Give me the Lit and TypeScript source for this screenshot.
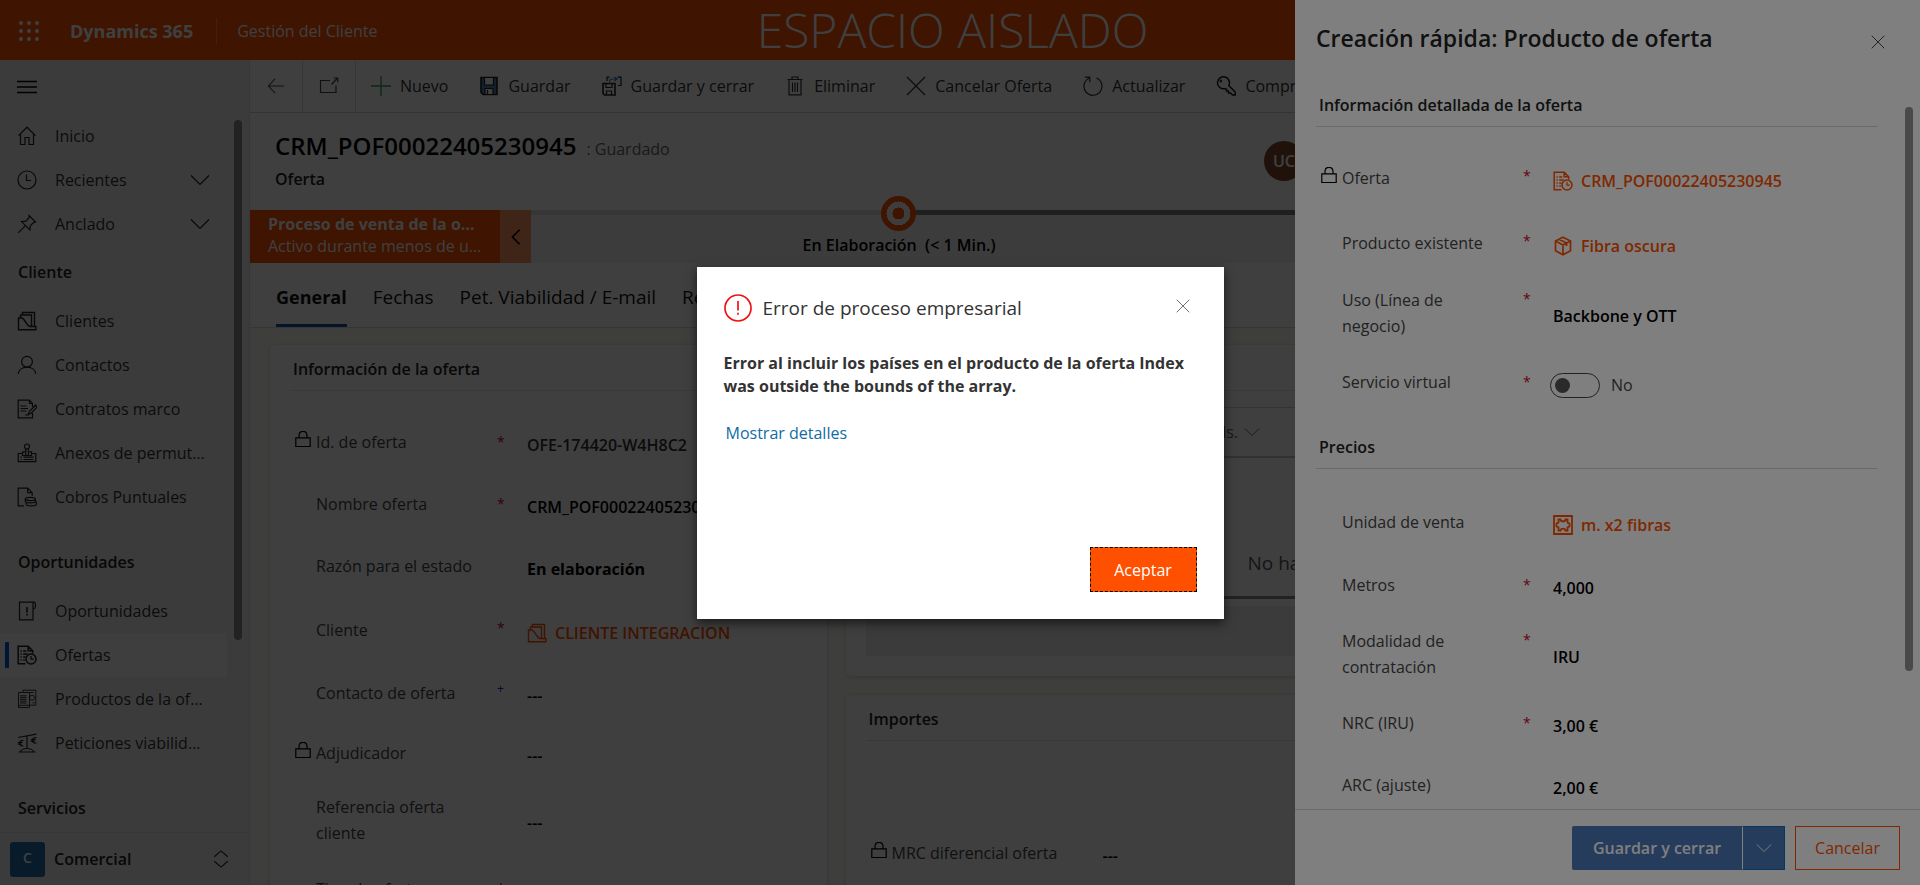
import { LitElement, html, css, svg, nothing, type TemplateResult } from "lit";
import { customElement } from "lit/decorators.js";
import { classMap } from "lit/directives/class-map.js";

type Icon = TemplateResult<2>;

const icon = (body: Icon, size = 20) => html`
  <svg class="icon" width=${size} height=${size} viewBox="0 0 20 20" fill="none" stroke="currentColor"
    stroke-width="1.2" aria-hidden="true">${body}</svg>`;

const ICONS: Record<string, Icon> = {
  menu: svg`<path d="M0 4.500h20M0 10h20M0 15.500h20" stroke-width="1.4"/>`,
  home: svg`<path d="M1.5 9.6 10 1.2l8.500 8.400M3.500 8v10.500h4.500v-7h4v7h4.500V8"/>`,
  clock: svg`<circle cx="10" cy="10" r="9"/><path d="M9.500 4.500v6h4.500"/>`,
  pin: svg`<path d="m12 1.500 6.500 6.500-2 .6-3.200 3.200-.4 4.200-8.400-8.400 4.400-.4 3-3.200zM8.200 11.800 1.200 18.800"/>`,
  chevronDown: svg`<path d="m1 5.500 9 9 9-9"/>`,
  chevronLeft: svg`<path d="m14 2-8 8 8 8" stroke-width="1.8"/>`,
  updown: svg`<path d="m2.500 7.500 7.500-6.500 7.500 6.500M2.500 12.500l7.500 6.500 7.500-6.500"/>`,
  folder: svg`<path d="M1.500 18.800V7H5c2.500.5 4.500 7.800 8 8.500h5.800v3.300z" stroke-width="1.400"/><path d="M3.500 7V4H14.500v11.500M5.500 4V1.500h12v14" stroke-width="1.400"/>`,
  person: svg`<circle cx="10" cy="6.700" r="5.400"/><path d="M1.200 19c.5-4.500 4.300-6.900 8.800-6.900s8.300 2.400 8.800 6.900"/>`,
  contract: svg`<path d="M15.500 8V4.500L12.500 1.200H1.200v17.600h14.300V14M12.500 1.200v3.300h3M3.500 7h6M3.500 9.500h7.500M3.500 12h6M8 16h4M18.800 6l-6.500 6.500-1 2.700 2.700-.8 6-6.200z"/>`,
  stamp: svg`<circle cx="10" cy="3.500" r="2.500"/><path d="M8.700 5.600v3.200H5.500v3.700h9V8.800h-3.200V5.600M5.500 10.500H1.200v8.200h17.600v-8.200h-4.300M3.500 14.200h1.300M6.500 14.200h10M3.500 16.500h1.300M6.500 16.500h10M8.700 8.800v3.700M11.300 8.800v3.700"/>`,
  coins: svg`<path d="M7 18.800H1.200V1.200h9.500l4.500 4.500v3M10.700 1.200v4.500h4.500"/><ellipse cx="13.300" cy="12" rx="5" ry="1.600"/><path d="M8.300 12v2.200c0 2.200 10 2.200 10 0V12M9.300 15.500v1.800c0 2.200 10 2.200 10 0v-2c0-.8-.5-1-1-1.200"/>`,
  opportunity: svg`<path d="M16 7.500v11.300H2.500V1.200h14.800c1.500 0 1.500 6.300 0 6.300H16V1.200"/><path d="M10 6v5.500M10 12.800v1.700" stroke-width="1.600"/>`,
  offer: svg`<path d="M8.500 18.800H1.200V1.200h10l4.500 4.500v2.800M11.200 1.200v4.500h4.500M3.500 6h1.300M6.200 6h3M3.500 9h1.300M6.200 9h4.500M3.500 12h1.300M6.200 12h2.300M3.500 15h1.300M6.200 15h1.600" stroke-width="1.500"/><circle cx="14" cy="14" r="5" stroke-width="1.500"/><path d="M14 11v3.200h2.800"/>`,
  products: svg`<path d="M1.500 3.500h11v15h-11zM6 3.500V1.200h12.800v15h-6.300M1.500 16.300h11M12.500 3.500h4M15.500 13.800h2" stroke-width=".9"/><path d="M3 6.800h6.500M3 8.600h6.500M3 10.400h6.500M3 12.200h6.500M3 14h6.500" stroke-width=".9"/><circle cx="15" cy="8.800" r="2.500" stroke-width=".9"/>`,
  scale: svg`<path d="M1 4.500 19.500 1.200M10 3.500v12M1.500 19h17M3 19c1.500-2.800 4-3.500 7-3.500s5.500.7 7 3.500"/><path d="M6.500 7.800c-4.500-2-6 6-.2 5M.8 9.500h4.700M.8 11.200h4M19.500 5c-4.500-2-6 6-.2 5M13.800 6.700h4.700M13.800 8.400h4"/>`,
  back: svg`<path d="M19 10H1.500M9 2 1.500 10 9 18"/>`,
  popout: svg`<path d="M11 4.500H1.500v12h15.500V9.500M12.500 8.500 18.500 2M14.500 2h4.200v4.200"/>`,
  plus: svg`<path d="M10 0v20M0 10h20" stroke="#2f9e5b" stroke-width="1.300"/>`,
  save: svg`<path d="M2 1.500h16v17H4L2 16.500z" fill="#4d86b8" stroke="#222" stroke-width="1.600"/><path d="M5.500 1.500h9V9h-9z" fill="#fff" stroke="#222"/><path d="M6 18v-5.500h8V18" fill="#fff" stroke="#222"/><path d="M8.500 14v4"/>`,
  saveClose: svg`<path d="M1 7.500h12v11.500H2.500L1 17.500z" stroke="#222" stroke-width="1.600"/><path d="M4 7.500h6v4H4zM4.500 19v-4h5v4" stroke="#222"/><path d="M5 5V1.200h2.500M15.500 1.200H19V9.500h-3" stroke="#222"/><path d="M7.500 6c0-2 1-3 3-3h4M12.500 1l2.500 2-2.500 2" stroke="#2b7cd3"/>`,
  trash: svg`<path d="M2.500 3.500h15M7 3.500V1h6v2.500M4 3.500v15.300h12V3.500M7.500 6.500v9.500M10 6.500v9.500M12.500 6.500v9.500"/>`,
  cross: svg`<path d="m1 1 18 18M19 1 1 19"/>`,
  refresh: svg`<path d="M13.500 2A9 9 0 1 1 6 2.200M1.800 1.200h5v5"/>`,
  key: svg`<path d="M12.800 9.500A6 6 0 1 0 8.300 12.700l2.200.3v2h2v2h2l2 2H19.200v-2.900z" stroke="#111" stroke-width="1.400"/><circle cx="4.800" cy="5" r=".8"/>`,
  lock: svg`<path d="M1 8.500h18v11H1zM5 8.500V6c0-7.300 10-7.300 10 0v2.500" stroke-width="1.500"/>`,
  box: svg`<path d="m10 1.200 7.500 3.800v9.800L10 18.800l-7.500-4V5zM2.500 5 10 9l7.500-4M10 9v9.800M6 3.200l7.500 3.900v3" stroke-width="1.700"/>`,
  unit: svg`<path d="M1 1h18v18H1z" stroke-width="1.800"/><path d="M5.500 4.500h2c.5 2.500 4.500 2.500 5 0h2v3.200l2 .8v3l-2 .8v3.200h-2c-.5-2.500-4.500-2.500-5 0h-2v-3.200l-2-.8v-3l2-.8z" stroke-width="1.800"/>`,
  alert: svg`<circle cx="10" cy="10" r="9.300" stroke-width="1.200"/><path d="M10 5v6.800M10 13.400v1.500" stroke-width="1.200"/>`,
};

interface Field {
  id: string;
  label: string;
  kind: "text" | "choice" | "lookup" | "toggle" | "empty";
  value?: string;
  icon?: string;
  mark?: "required" | "recommended";
  locked?: boolean;
  tone?: "muted" | "strong";
  tall?: boolean;
}

const control = (f: Field) => {
  switch (f.kind) {
    case "lookup":
      return html`<a class="lookup" id=${f.id} href="#">${icon(ICONS[f.icon!])}<span>${f.value}</span></a>`;
    case "choice":
      return html`<select class=${classMap({ control: true, strong: f.tone === "strong" })} id=${f.id}><option>${f.value}</option></select>`;
    case "toggle":
      return html`<span class="toggle"><input type="checkbox" role="switch" id=${f.id}><span>${f.value}</span></span>`;
    default:
      return html`<input type="text" class=${classMap({ control: true, muted: f.tone === "muted" })} id=${f.id}
        .value=${f.value ?? "---"} ?readonly=${!!f.locked}>`;
  }
};

const field = (f: Field) => html`
  <div class=${classMap({ field: true, linked: f.kind === "lookup", double: !!f.tall, compact: !!f.locked && f.kind === "empty" })}>
    <span class="lock">${f.locked ? icon(ICONS.lock, 16) : nothing}</span>
    <label for=${f.id}>${f.label}</label>
    <span class=${classMap({ mark: true, blue: f.mark === "recommended" })}>${f.mark === "required" ? "*" : f.mark ? "+" : ""}</span>
    <div class="value">${control(f)}</div>
  </div>`;

const shared = css`
  :host { display: block; font-family: "Open Sans", "Noto Sans", sans-serif; font-size: 16px; line-height: 26px; color: #222; }
  *, *::before, *::after { box-sizing: border-box; }
  h1, h2, h3, p, ul { margin: 0; padding: 0; font-weight: 400; }
  ul { list-style: none; }
  a { color: inherit; text-decoration: none; }
  button, input, select { font: inherit; color: inherit; margin: 0; padding: 0; border: 0; background: none; border-radius: 0; }
  .icon { display: block; flex: none; }
  .section-title { font-size: 16px; font-weight: 600; line-height: 42px; padding-left: 3px; border-bottom: 1px solid #e6e4e2; }
  .fields { padding-top: 20px; }
  .field { display: grid; grid-template-columns: 26px 175px 36px minmax(0, 1fr); align-items: center; min-height: 62px; }
  .field.linked { min-height: 65px; }
  .field.compact { min-height: 58px; }
  .field.double { min-height: 76px; }
  .lock { padding-left: 5px; padding-bottom: 6px; color: #000; }
  .field label { color: #444; }
  .field.double label { padding-right: 30px; }
  .mark { align-self: start; margin-top: 21px; line-height: 20px; padding-left: 6px; font-size: 14px; color: #d0021b; }
  .double .mark { margin-top: 14px; }
  .mark.blue { color: #2020c0; font-size: 12px; line-height: 12px; }
  .value { padding-top: 6px; min-width: 0; }
  .control { appearance: none; display: block; width: 100%; font-weight: 600; color: #000; line-height: 26px; height: 26px; }
  .control.muted { color: #333; }
  .control.strong { font-weight: 700; }
  .lookup { display: flex; align-items: center; gap: 8px; color: #ff5000; font-weight: 600; }
  .toggle { display: flex; align-items: center; gap: 11px; }
`;

@customElement("app-sidebar")
class AppSidebar extends LitElement {
  static styles = [shared, css`
    :host { display: flex; flex-direction: column; background: #efefef; border-right: 1px solid #dcdcdc; min-height: 0; }
    .toggle-nav { display: flex; align-items: center; height: 54px; padding: 0 17px; flex: none; color: #000; }
    .scroller { flex: 1; min-height: 0; display: flex; overflow: hidden; gap: 7px; padding-right: 7px; }
    nav { flex: 1; min-width: 0; }
    .bar { width: 8px; height: 520px; margin-top: 6px; border-radius: 4px; background: #888; flex: none; }
    .item { display: flex; align-items: center; gap: 18px; height: 44px; padding-left: 17px; padding-right: 17px; }
    .item .name { flex: 1; min-width: 0; max-width: 152px; white-space: nowrap; overflow: hidden; text-overflow: ellipsis; color: #333; }
    .item .name + .icon { margin-left: auto; }
    .item.active { background: #f8f8f8; position: relative; }
    .item.active::before { content: ""; position: absolute; left: 5px; top: 9px; width: 4px; height: 26px; background: #0050d8; border-radius: 1px; }
    h2 { font-size: 16px; font-weight: 600; line-height: 53px; padding-left: 18px; }
    h2.spaced { margin-top: 17px; }
    .area { display: flex; align-items: center; height: 53px; padding: 0 19px 0 10px; gap: 9px; border-top: 1px solid #dcdcdc; font-weight: 600; flex: none; width: 100%; text-align: left; }
    .area .badge { width: 35px; height: 35px; border-radius: 3px; background: #1f6fa8; color: #fff; font-size: 14px; line-height: 32px; text-align: center; }
    .area .name { flex: 1; }
  `];

  private item(iconName: string, name: string, opts: { expand?: boolean; active?: boolean } = {}) {
    return html`<li><a href="#" class=${classMap({ item: true, active: !!opts.active })}>
      ${icon(ICONS[iconName])}<span class="name">${name}</span>${opts.expand ? icon(ICONS.chevronDown) : nothing}</a></li>`;
  }

  render() {
    return html`
      <button class="toggle-nav" aria-label="Menú">${icon(ICONS.menu)}</button>
      <div class="scroller">
        <nav>
          <ul>
            ${this.item("home", "Inicio")}
            ${this.item("clock", "Recientes", { expand: true })}
            ${this.item("pin", "Anclado", { expand: true })}
          </ul>
          <h2>Cliente</h2>
          <ul>
            ${this.item("folder", "Clientes")}
            ${this.item("person", "Contactos")}
            ${this.item("contract", "Contratos marco")}
            ${this.item("stamp", "Anexos de permutas")}
            ${this.item("coins", "Cobros Puntuales")}
          </ul>
          <h2 class="spaced">Oportunidades</h2>
          <ul>
            ${this.item("opportunity", "Oportunidades")}
            ${this.item("offer", "Ofertas", { active: true })}
            ${this.item("products", "Productos de la oferta")}
            ${this.item("scale", "Peticiones viabilidades")}
          </ul>
          <h2 class="spaced">Servicios</h2>
        </nav>
        <div class="bar"></div>
      </div>
      <button class="area"><span class="badge">C</span><span class="name">Comercial</span>${icon(ICONS.updown, 18)}</button>`;
  }
}

@customElement("offer-form")
class OfferForm extends LitElement {
  static styles = [shared, css`
    :host { display: flex; flex-direction: column; min-width: 0; min-height: 0; background: #fff; overflow: hidden; }
    .commands { display: flex; align-items: stretch; height: 53px; border-bottom: 1px solid #d2d0ce; flex: none; white-space: nowrap; }
    .nav-btn { width: 53px; display: grid; place-items: center; border-right: 1px solid #d8d8d8; color: #444; flex: none; }
    .command-list { display: flex; gap: 31px; padding-left: 15px; }
    .command { display: flex; align-items: center; gap: 9px; color: #333; }
    .head { display: flex; justify-content: space-between; align-items: flex-start; padding: 16px 0 0 25px; flex: none; height: 97px; }
    .title-line { display: flex; align-items: baseline; gap: 10px; line-height: 34px; }
    h1 { font-size: 24px; font-weight: 600; color: #000; }
    .status { color: #666; }
    .kind { font-weight: 600; }
    .owner { flex: 0 0 656px; padding-top: 12px; }
    .avatar { width: 40px; height: 40px; border-radius: 50%; background: #80482c; color: #fff; font-weight: 600; display: grid; place-items: center; }
    .process { display: flex; height: 53px; background: #f0f0f0; flex: none; }
    .process-name { width: 250px; background: #ff5000; color: #fff; padding: 3px 17px 0 18px; line-height: 22px; }
    .process-name p { white-space: nowrap; overflow: hidden; text-overflow: ellipsis; }
    .process-name .strong { font-weight: 700; padding-right: 4px; }
    .collapse { width: 31px; background: #fc9060; display: grid; place-items: center; color: #000; }
    .stages { flex: 1; display: flex; }
    .stage { position: relative; flex: 0 0 53%; text-align: center; font-weight: 600; color: #000; padding-top: 22px; }
    .stage .track { position: absolute; left: 0; right: 0; top: 0; height: 5px; background: linear-gradient(to right, #e1dfdd 50%, #807d74 50%); }
    .stage .dot { position: absolute; left: 50%; top: 3px; width: 35px; height: 35px; margin: -17px 0 0 -18px; border-radius: 50%; background: radial-gradient(circle, #ff5000 0 6px, #f4f4f4 6px 12px, #ff5000 12px); }
    .stage:last-child { flex: 1; }
    .stage:last-child .track { background: #807d74; }
    .tabs { display: flex; gap: 26px; padding-left: 26px; height: 65px; border-bottom: 1px solid #dcdad6; font-size: 19px; flex: none; color: #111; white-space: nowrap; }
    .tabs a { padding-top: 21px; height: 64px; }
    .tabs a.current { font-size: 18px; font-weight: 700; border-bottom: 3px solid #1f4ea8; }
    .cards { flex: 1; min-height: 0; overflow: hidden; background: #faf8f2; display: grid; grid-template-columns: 19fr 36fr; gap: 19px; padding: 17px 20px 0; align-items: start; }
    .column { display: grid; gap: 19px; }
    .card { background: #fff; border-radius: 5px; padding: 3px 20px 20px; box-shadow: 0 1px 4px rgba(0, 0, 0, .14); }
    .grid-tools { display: flex; align-items: center; height: 51px; margin-top: 16px; padding-left: 326px; gap: 6px; border-top: 1px solid #d2d0ce; border-bottom: 2px solid #c8c6c4; color: #666; }
    .grid-body { height: 141px; padding: 92px 0 0 382px; font-size: 19px; color: #555; border-bottom: 3px solid #888; }
    .grid-foot { height: 50px; background: #efefef; margin-top: 7px; }
    .amounts { padding-top: 83px; }
  `];

  private commands: [string, string][] = [
    ["plus", "Nuevo"], ["save", "Guardar"], ["saveClose", "Guardar y cerrar"], ["trash", "Eliminar"],
    ["cross", "Cancelar Oferta"], ["refresh", "Actualizar"], ["key", "Comprobar acceso"],
  ];

  private fields: Field[] = [
    { id: "offer-id", label: "Id. de oferta", kind: "text", value: "OFE-174420-W4H8C2", mark: "required", locked: true, tone: "muted" },
    { id: "offer-name", label: "Nombre oferta", kind: "text", value: "CRM_POF00022405230945", mark: "required" },
    { id: "reason", label: "Razón para el estado", kind: "choice", value: "En elaboración", tone: "strong" },
    { id: "client", label: "Cliente", kind: "lookup", value: "CLIENTE INTEGRACION", icon: "folder", mark: "required" },
    { id: "contact", label: "Contacto de oferta", kind: "empty", mark: "recommended" },
    { id: "adjudicator", label: "Adjudicador", kind: "empty", locked: true },
    { id: "client-ref", label: "Referencia oferta cliente", kind: "empty", tall: true },
    { id: "offer-type", label: "Tipo de oferta", kind: "empty", mark: "required" },
  ];

  render() {
    return html`
      <div class="commands">
        <button class="nav-btn" aria-label="Atrás">${icon(ICONS.back, 18)}</button>
        <button class="nav-btn" aria-label="Abrir en ventana nueva">${icon(ICONS.popout)}</button>
        <div class="command-list">
          ${this.commands.map(([i, name]) => html`<button class="command">${icon(ICONS[i])}<span>${name}</span></button>`)}
        </div>
      </div>
      <div class="head">
        <div>
          <div class="title-line"><h1>CRM_POF00022405230945</h1><span class="status">: Guardado</span></div>
          <p class="kind">Oferta</p>
        </div>
        <div class="owner"><div class="avatar">UC</div></div>
      </div>
      <div class="process">
        <div class="process-name">
          <p class="strong">Proceso de venta de la oferta</p>
          <p>Activo durante menos de un minuto</p>
        </div>
        <button class="collapse" aria-label="Contraer">${icon(ICONS.chevronLeft, 18)}</button>
        <div class="stages">
          <div class="stage"><div class="track"></div><div class="dot"></div>En Elaboración &nbsp;(&lt; 1 Min.)</div>
          <div class="stage"><div class="track"></div></div>
        </div>
      </div>
      <nav class="tabs">
        <a href="#" class="current">General</a><a href="#">Fechas</a><a href="#">Pet. Viabilidad / E-mail</a><a href="#">Relacionado</a>
      </nav>
      <div class="cards">
        <section class="card">
          <h2 class="section-title">Información de la oferta</h2>
          <div class="fields">${this.fields.map(field)}</div>
        </section>
        <div class="column">
          <section class="card">
            <h2 class="section-title">Productos</h2>
            <div class="grid-tools"><span>Cmds.</span>${icon(ICONS.chevronDown, 16)}</div>
            <div class="grid-body">No hay datos disponibles.</div>
            <div class="grid-foot"></div>
          </section>
          <section class="card">
            <h2 class="section-title">Importes</h2>
            <div class="amounts">${field({ id: "mrc", label: "MRC diferencial oferta", kind: "empty", locked: true })}</div>
          </section>
        </div>
      </div>`;
  }
}

@customElement("quick-create")
class QuickCreate extends LitElement {
  static styles = [shared, css`
    :host { display: flex; flex-direction: column; background: #fff; }
    header { display: flex; justify-content: space-between; align-items: flex-start; height: 84px; padding: 21px 35px 0 21px; flex: none; }
    h1 { font-size: 23px; line-height: 34px; font-weight: 600; }
    .close { padding-top: 14px; }
    .body { flex: 1; min-height: 0; display: flex; overflow: hidden; gap: 27px; padding: 0 7px 0 21px; }
    .content { flex: 1; min-width: 0; }
    .content .section-title { border-color: #d6d4d2; }
    .first { padding-top: 18px; }
    .second { margin-top: 13px; }
    .bar { width: 8px; height: 564px; margin-top: 23px; border-radius: 4px; background: #929292; flex: none; }
    .toggle input { appearance: none; display: block; width: 50px; height: 25px; border: 1px solid #444; border-radius: 13px; padding: 4px; margin-left: -3px; }
    .toggle input::before { content: ""; display: block; width: 15px; height: 15px; border-radius: 50%; background: #555; }
    .toggle { color: #444; }
    footer { display: flex; justify-content: flex-end; gap: 10px; height: 76px; padding: 16px 20px 0 0; border-top: 1px solid #d2d2d2; flex: none; }
    .split { display: flex; height: 44px; background: #4a78b8; color: #fff; border-radius: 2px; }
    .split .save { width: 170px; font-weight: 600; }
    .split .more { width: 43px; display: grid; place-items: center; border: 1px solid #0f6cbd; border-left-color: #fff; }
    .cancel { width: 105px; height: 44px; border: 1px solid #ff5000; color: #ff5000; }
  `];

  private details: Field[] = [
    { id: "q-offer", label: "Oferta", kind: "lookup", value: "CRM_POF00022405230945", icon: "offer", mark: "required", locked: true },
    { id: "q-product", label: "Producto existente", kind: "lookup", value: "Fibra oscura", icon: "box", mark: "required" },
    { id: "q-use", label: "Uso (Línea de negocio)", kind: "choice", value: "Backbone y OTT", mark: "required", tall: true },
    { id: "q-virtual", label: "Servicio virtual", kind: "toggle", value: "No", mark: "required" },
  ];

  private prices: Field[] = [
    { id: "q-unit", label: "Unidad de venta", kind: "lookup", value: "m. x2 fibras", icon: "unit" },
    { id: "q-meters", label: "Metros", kind: "text", value: "4,000", mark: "required" },
    { id: "q-mode", label: "Modalidad de contratación", kind: "choice", value: "IRU", mark: "required", tall: true },
    { id: "q-nrc", label: "NRC (IRU)", kind: "text", value: "3,00 €", mark: "required" },
    { id: "q-arc", label: "ARC (ajuste)", kind: "text", value: "2,00 €" },
  ];

  render() {
    return html`
      <header><h1>Creación rápida: Producto de oferta</h1><button class="close" aria-label="Cerrar">${icon(ICONS.cross, 14)}</button></header>
      <div class="body">
        <div class="content">
          <h2 class="section-title">Información detallada de la oferta</h2>
          <div class="fields first">${this.details.map(field)}</div>
          <h2 class="section-title second">Precios</h2>
          <div class="fields">${this.prices.map(field)}</div>
        </div>
        <div class="bar"></div>
      </div>
      <footer>
        <div class="split"><button class="save">Guardar y cerrar</button><button class="more" aria-label="Más opciones">${icon(ICONS.chevronDown, 16)}</button></div>
        <button class="cancel">Cancelar</button>
      </footer>`;
  }
}

@customElement("error-dialog")
class ErrorDialog extends LitElement {
  static styles = [shared, css`
    :host { display: flex; flex-direction: column; background: #fff; width: 527px; min-height: 352px; padding: 24px 27px 27px; box-shadow: 0 4px 10px rgba(0, 0, 0, .6); }
    header { display: flex; align-items: center; gap: 11px; height: 34px; }
    header .alert { color: #f01010; }
    h1 { flex: 1; font-size: 19px; line-height: 30px; color: #333; }
    .close { color: #555; padding: 0 7px 4px; }
    .message { margin-top: 27px; font-weight: 700; line-height: 23px; color: #333; }
    .details { margin: 22px 0 0 2px; align-self: flex-start; color: #0f6ca5; }
    .accept { margin-top: auto; align-self: flex-end; width: 107px; height: 45px; background: #ff5000; color: #fff; border: 1px dashed #000; padding-top: 2px; }
  `];

  render() {
    return html`
      <header><span class="alert">${icon(ICONS.alert, 28)}</span><h1>Error de proceso empresarial</h1>
        <button class="close" aria-label="Cerrar">${icon(ICONS.cross, 14)}</button></header>
      <p class="message">Error al incluir los países en el producto de la oferta Index was outside the bounds of the array.</p>
      <a class="details" href="#">Mostrar detalles</a>
      <button class="accept">Aceptar</button>`;
  }
}

@customElement("app-root")
class AppRoot extends LitElement {
  static styles = [shared, css`
    :host { height: 100vh; overflow: hidden; position: relative; }
    .page { height: 100%; display: grid; grid-template: 60px minmax(0, 1fr) / 250px minmax(0, 1fr); }
    .top { grid-column: 1 / -1; display: grid; grid-template-columns: 1fr auto 1fr; align-items: center; padding: 0 34px 0 19px; background: #ff5000; color: #fff; }
    .brand { display: flex; align-items: center; padding-top: 2px; }
    .brand .product { font-size: 18px; font-weight: 700; padding: 0 23px 0 31px; line-height: 26px; }
    .brand .app { border-left: 1px solid #ff8a55; padding-left: 20px; line-height: 26px; }
    .environment { font-size: 48px; line-height: 60px; font-weight: 300; }
    .scrim { position: absolute; inset: 0; background: rgba(0, 0, 0, .5); }
    .drawer { position: absolute; top: 0; right: 0; bottom: 0; width: 625px; }
    .modal { position: absolute; inset: 0; display: grid; place-items: center; background: rgba(0, 0, 0, .5); }
  `];

  render() {
    return html`
      <div class="page">
        <header class="top">
          <div class="brand">
            <svg class="icon" width="20" height="20" viewBox="0 0 20 20" fill="currentColor">
              ${[2, 10, 18].map((y) => [2, 10, 18].map((x) => svg`<circle cx=${x} cy=${y} r="2"/>`))}
            </svg>
            <span class="product">Dynamics 365</span><span class="app">Gestión del Cliente</span>
          </div>
          <div class="environment">ESPACIO AISLADO</div>
        </header>
        <app-sidebar></app-sidebar>
        <offer-form></offer-form>
      </div>
      <div class="scrim"></div>
      <quick-create class="drawer"></quick-create>
      <div class="modal"><error-dialog role="alertdialog"></error-dialog></div>`;
  }
}
